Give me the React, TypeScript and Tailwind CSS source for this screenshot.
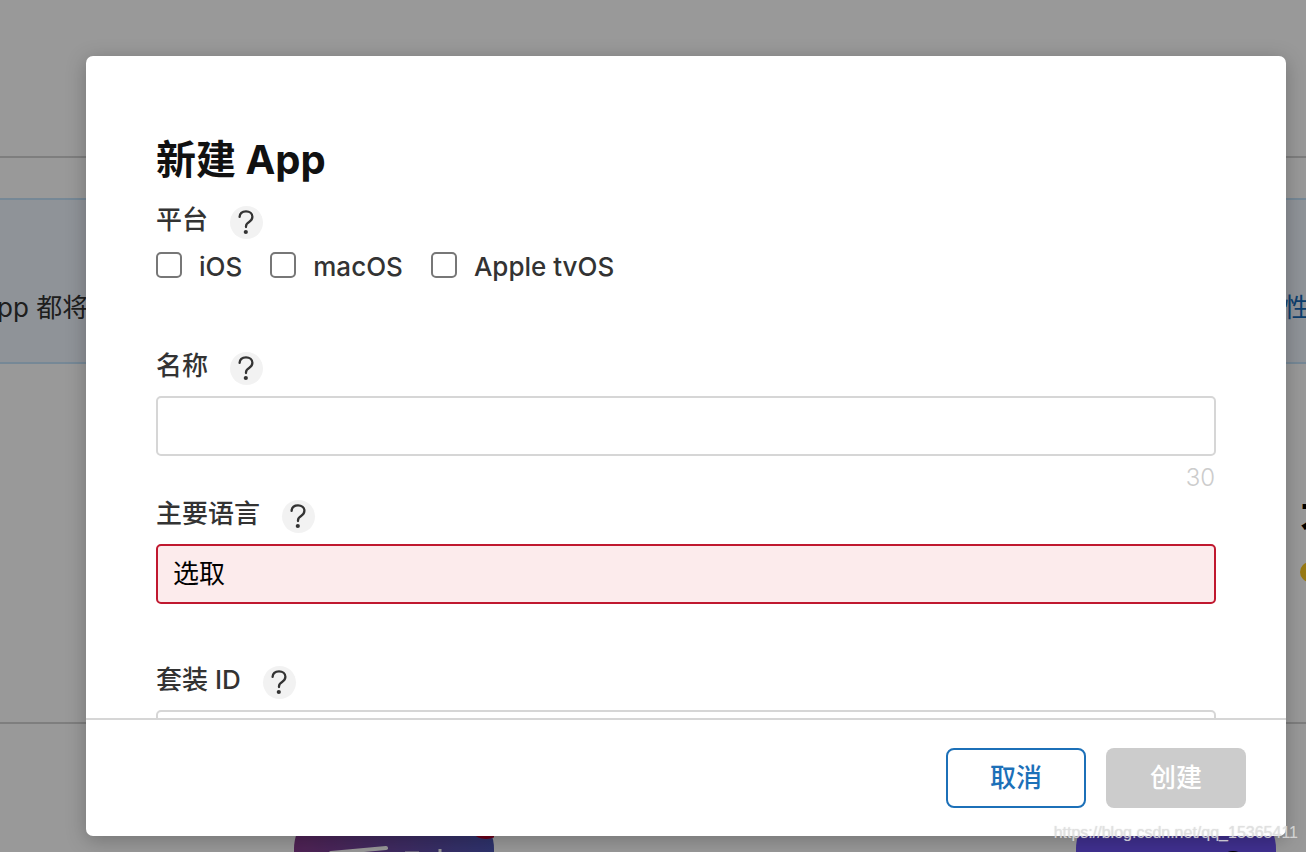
import { useState, type ReactNode } from "react";

const inputBox = "block h-[60px] w-full rounded-[5px] border-2 px-[15px] pb-[2px] text-[26px] outline-none";

function HelpButton({ topic }: { topic: string }) {
  return (
    <button
      type="button"
      aria-label={topic}
      className="mt-1 flex size-[33px] items-center justify-center rounded-full bg-[#f2f2f2]"
    >
      <svg viewBox="0 0 33 33" className="size-[33px]" fill="none" aria-hidden="true">
        <path
          d="M9.6 10.9C9.8 7.4 12.3 5.3 16 5.3c3.7 0 6.4 2.3 6.4 5.5 0 2.3-1.1 3.8-3.3 5.2-2.3 1.4-3.1 2.4-3.1 4.3v.8"
          stroke="#333"
          strokeWidth="2.3"
          strokeLinecap="round"
          strokeLinejoin="round"
        />
        <circle cx="15.8" cy="26" r="2.1" fill="#333" />
      </svg>
    </button>
  );
}

function FieldHeader({ htmlFor, children, text }: { htmlFor?: string; children: ReactNode; text: string }) {
  const style = "text-[26px] leading-[35px] font-medium text-[#333]";
  return (
    <div className="mb-[11px] flex items-start gap-[22px]">
      {htmlFor ? (
        <label htmlFor={htmlFor} className={style}>{children}</label>
      ) : (
        <span id="platform-title" className={style}>{children}</span>
      )}
      <HelpButton topic={text} />
    </div>
  );
}

function NewAppDialog() {
  const [name, setName] = useState("");
  return (
    <form
      role="dialog"
      aria-labelledby="dialog-title"
      className="flex h-full flex-col overflow-hidden rounded-[7px] bg-white shadow-[0_4px_20px_rgba(0,0,0,0.25)]"
    >
      <div className="min-h-0 flex-1 overflow-y-auto px-[70px] pt-20 [scrollbar-width:none]">
        <h1 id="dialog-title" className="mb-[18px] text-[40px] leading-[48px] font-bold text-[#111]">
          新建 App
        </h1>

        <div role="group" aria-labelledby="platform-title" className="mb-[66px]">
          <FieldHeader text="平台">平台</FieldHeader>
          <div className="mt-[13px] flex gap-7">
            {["iOS", "macOS", "Apple tvOS"].map((platform) => (
              <label key={platform} className="flex gap-[17px] text-[26px] leading-[30px] font-medium text-[#333]">
                <input
                  type="checkbox"
                  className="size-[26px] appearance-none rounded-[5px] border-2 border-[#777] bg-white checked:bg-[#0070c9]"
                />
                {platform}
              </label>
            ))}
          </div>
        </div>

        <FieldHeader htmlFor="name" text="名称">名称</FieldHeader>
        <input
          id="name"
          maxLength={30}
          value={name}
          onChange={(e) => setName(e.target.value)}
          className={`${inputBox} border-[#d6d6d6]`}
        />
        <p className="mt-[7px] mb-[3px] pr-px text-right text-[24px] leading-[30px] font-light text-[#ccc]">
          {30 - name.length}
        </p>

        <FieldHeader htmlFor="language" text="主要语言">主要语言</FieldHeader>
        <select
          id="language"
          className={`${inputBox} mb-[58px] appearance-none border-[#c0182f] bg-[#fcebec] text-black`}
        >
          <option>选取</option>
        </select>

        <FieldHeader htmlFor="bundle" text="套装 ID">套装 ID</FieldHeader>
        <input id="bundle" className={`${inputBox} border-[#d6d6d6]`} />
      </div>

      <footer className="flex justify-end gap-5 border-t-2 border-[#d6d6d6] px-10 py-7 text-[26px] font-medium">
        <button type="button" className="h-[60px] w-[140px] rounded-[8px] border-2 border-[#1c70b8] pb-[2px] text-[#1c70b8]">
          取消
        </button>
        <button type="submit" disabled className="h-[60px] w-[140px] rounded-[8px] bg-[#ccc] pb-[2px] text-white">
          创建
        </button>
      </footer>
    </form>
  );
}

function AppsPage() {
  return (
    <div className="h-full overflow-hidden bg-white text-[26px] text-[#333]">
      <div className="h-[158px] border-b-2 border-[#d3d3d3]" />
      <div className="mt-10 flex h-[166px] items-start justify-between border-y-2 border-[#c5e3fa] bg-[#eef5fd] pt-[88px]">
        <span className="-ml-[3px]">pp 都将</span>
        <a href="#attributes" className="w-[22px] whitespace-nowrap text-[#1469b8]">性</a>
      </div>
      <div className="flex h-[360px] flex-col items-end border-b-2 border-[#d3d3d3] pt-[134px]">
        <span className="w-[6px] text-[40px] leading-[48px] font-bold whitespace-nowrap text-black">不</span>
        <span className="mt-4 h-5 w-[6px]">
          <span className="block size-5 rounded-full bg-[#ffcc22]" />
        </span>
      </div>
      <div className="flex justify-between pt-[80px] pr-[30px] pl-[294px]">
        <svg viewBox="0 0 200 200" className="size-[200px]" aria-hidden="true">
          <defs>
            <linearGradient id="violet" x1="0" x2="1">
              <stop offset="0" stopColor="#853a8d" />
              <stop offset="1" stopColor="#4d55b5" />
            </linearGradient>
          </defs>
          <rect width="200" height="200" rx="45" fill="url(#violet)" />
          <ellipse cx="192" cy="30" rx="11" ry="5" fill="#b5002c" />
          <path d="M37 49L92 44" stroke="#fff" strokeWidth="4" strokeLinecap="round" />
          <path d="M146 45v20M111 49h14" stroke="#fff" strokeWidth="3" />
        </svg>
        <svg viewBox="0 0 200 200" className="size-[200px]" aria-hidden="true">
          <rect width="200" height="200" rx="45" fill="#6b50f0" />
          <ellipse cx="157" cy="51" rx="8" ry="4" fill="#000" />
          <ellipse cx="112" cy="52" rx="8" ry="3" fill="#fff" />
        </svg>
      </div>
    </div>
  );
}

export default function App() {
  return (
    <main
      lang="zh-CN"
      className="relative h-screen overflow-hidden font-['Inter','Noto_Sans_CJK_SC',sans-serif]"
    >
      <AppsPage />
      <div className="absolute inset-0 bg-black/40 pt-14 pr-5 pb-4 pl-[86px]">
        <NewAppDialog />
      </div>
      <span className="absolute right-2 bottom-2 font-['Liberation_Sans',sans-serif] text-[16px] leading-[22px] text-[#e2e2e2]/80 [text-shadow:0_0_1px_#aaaaaa80]">
        https://blog.csdn.net/qq_15365411
      </span>
    </main>
  );
}
